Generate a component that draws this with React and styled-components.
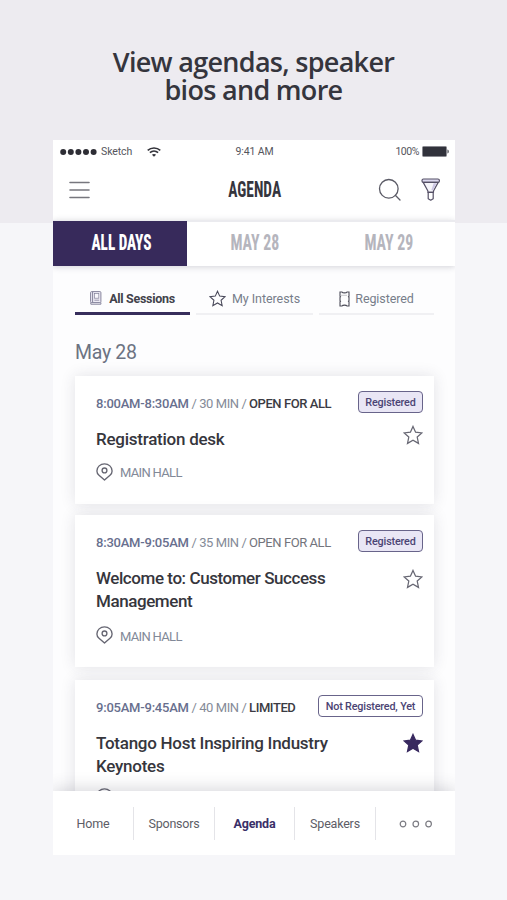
import styled, { createGlobalStyle } from "styled-components";

const GlobalStyle = createGlobalStyle`
  * {
    box-sizing: border-box;
  }
  body {
    margin: 0;
    background: #f6f6f9;
    font-family: Roboto, "Open Sans", sans-serif;
    color: #35353d;
  }
`;

const Page = styled.div`
  width: 507px;
  height: 900px;
  overflow: hidden;
  display: flex;
  flex-direction: column;
  align-items: center;
  background: linear-gradient(#edebf0 223px, #f6f6f9 223px);
`;

const Headline = styled.h1`
  height: 140px;
  margin: 0;
  padding-top: 48px;
  font-family: "Open Sans", sans-serif;
  font-size: 27px;
  font-weight: 600;
  line-height: 28px;
  letter-spacing: -0.7px;
  text-align: center;
`;

const Phone = styled.div`
  width: 402px;
  height: 715px;
  margin-right: -1px;
  display: flex;
  flex-direction: column;
  background: #fdfdfe;
  overflow: hidden;
`;

const StatusBar = styled.div`
  height: 23px;
  flex: none;
  display: grid;
  grid-template-columns: 1fr auto 1fr;
  align-items: center;
  padding: 0 6px 0 7px;
  background: #fff;
  font-size: 10.5px;
  letter-spacing: -0.1px;
  color: #55555c;
`;

const Carrier = styled.div`
  display: flex;
  align-items: center;
  gap: 4px;

  svg:last-child {
    margin-left: 11px;
  }
`;

const Battery = styled.div`
  display: flex;
  align-items: center;
  justify-content: flex-end;
  gap: 3px;
  letter-spacing: -0.45px;
`;

const Header = styled.div`
  height: 57px;
  flex: none;
  display: grid;
  grid-template-columns: 1fr auto 1fr;
  align-items: center;
  padding: 0 15px 4px 16px;
  background: #fff;
`;

const Actions = styled.div`
  display: flex;
  justify-content: flex-end;
  align-items: center;
  gap: 20px;
`;

// tall condensed lettering
const Narrow = styled.span`
  display: block;
  font-family: Roboto, sans-serif;
  font-stretch: 75%;
  font-size: 22px;
  font-weight: ${(props) => props.$weight || 700};
  line-height: 1;
  white-space: nowrap;
  transform: scaleX(${(props) => props.$squeeze});
`;

const DayTabs = styled.div`
  height: 46px;
  flex: none;
  display: grid;
  grid-template-columns: repeat(3, 1fr);
  border-top: 2px solid #ebebef;
  box-shadow: 0 1px 6px rgba(60, 60, 80, 0.22);
  background: #fff;
`;

const DayTab = styled.div`
  display: flex;
  align-items: center;
  justify-content: center;
  margin-top: ${(props) => (props.$active ? "-1px" : 0)};
  padding: 0 0 ${(props) => (props.$active ? "1px 3px" : "2px 1px")};
  background: ${(props) => (props.$active ? "#372a5b" : "#fff")};
  color: ${(props) => (props.$active ? "#fff" : "#b5b5bd")};
`;

const Content = styled.div`
  flex: 1;
  min-height: 0;
  padding: 18px 21px 0 22px;
  overflow: hidden;
`;

const Filters = styled.div`
  display: grid;
  grid-template-columns: 115px 117px 115px;
  gap: 6px;
`;

const Filter = styled.div`
  height: 31px;
  display: flex;
  align-items: center;
  justify-content: center;
  gap: ${(props) => props.$gap}px;
  border-bottom: ${(props) => (props.$active ? "3px solid #372e5c" : "2px solid #f0f0f3")};
  font-size: 12.5px;
  font-weight: ${(props) => (props.$active ? 700 : 400)};
  letter-spacing: ${(props) => props.$tracking}px;
  white-space: nowrap;
  color: ${(props) => (props.$active ? "#42424b" : "#777d8a")};
`;

const DayTitle = styled.h2`
  margin: 24px 0 10px;
  font-size: 19.5px;
  line-height: 27px;
  font-weight: 400;
  letter-spacing: -0.3px;
  color: #6c7382;
`;

const Card = styled.div`
  height: ${(props) => props.$height}px;
  margin-bottom: ${(props) => props.$after}px;
  padding: 15px 11px 0 21px;
  background: #fff;
  box-shadow: 0 0 14px rgba(50, 50, 70, 0.13);
`;

const CardTop = styled.div`
  display: flex;
  align-items: center;
  justify-content: space-between;
  height: 22px;
`;

const Meta = styled.div`
  padding-top: 2px;
  font-size: 13px;
  letter-spacing: -0.44px;
  white-space: nowrap;
  color: #858b98;
`;

const Time = styled.span`
  font-weight: 500;
  letter-spacing: -0.22px;
  color: #686f8e;
`;

const Access = styled.span`
  font-weight: ${(props) => (props.$strong ? 500 : 400)};
  color: ${(props) => (props.$strong ? "#3b3b43" : "#73747c")};
`;

const Badge = styled.div`
  height: 22px;
  width: ${(props) => (props.$filled ? 65 : 105)}px;
  display: flex;
  align-items: center;
  justify-content: center;
  border: 1.5px solid #68648a;
  border-radius: 4px;
  background: ${(props) => (props.$filled ? "#e9e6f5" : "#fff")};
  font-size: 10.8px;
  font-weight: 500;
  letter-spacing: -0.17px;
  white-space: nowrap;
  color: #4b4474;
`;

const CardBody = styled.div`
  display: flex;
  justify-content: space-between;
  margin-top: ${(props) => props.$top}px;
`;

const SessionTitle = styled.h3`
  margin: 0;
  width: 250px;
  font-size: 17px;
  line-height: 22.5px;
  font-weight: 500;
  letter-spacing: ${(props) => props.$tracking}px;
  color: #36363d;
`;

const StarSlot = styled.div`
  display: flex;
  margin-top: ${(props) => props.$top}px;
  height: 20px;
`;

const Place = styled.div`
  display: flex;
  align-items: center;
  gap: 7px;
  margin-top: ${(props) => props.$top}px;
  font-size: 13px;
  letter-spacing: -0.68px;
  color: #828998;

  span {
    padding-top: 2px;
  }
`;

const BottomNav = styled.div`
  position: relative;
  height: 64px;
  flex: none;
  display: grid;
  grid-template-columns: 81px 81px 80px 81px 79px;
  align-items: center;
  background: #fff;
  box-shadow: 0 -2px 16px rgba(50, 50, 70, 0.2);
`;

const NavItem = styled.div`
  height: 33px;
  display: flex;
  align-items: center;
  justify-content: center;
  padding-top: 1px;
  border-right: ${(props) => (props.$last ? "none" : "1px solid #e4e4e8")};
  font-size: 12.5px;
  font-weight: ${(props) => (props.$active ? 700 : 400)};
  letter-spacing: -0.2px;
  color: ${(props) => (props.$active ? "#3a2f68" : "#5d5d66")};
`;

const SignalDots = () => (
  <svg width="37" height="8" viewBox="0 0 37 8" fill="#2e2e35">
    {[3.2, 10.8, 18.4, 26, 33.6].map((x) => (
      <circle key={x} cx={x} cy="4" r="3" />
    ))}
  </svg>
);

const Wifi = () => (
  <svg width="14" height="10" viewBox="0 0 14 10" fill="none" stroke="#34343b" strokeWidth="1.6">
    <path d="M.7 3.4C4.3.1 9.7.1 13.3 3.4" />
    <path d="M2.9 5.7c2.4-2.1 5.8-2.1 8.2 0" />
    <path d="M4.9 7.8c1.2-1 3-1 4.2 0L7 9.8z" fill="#34343b" stroke="none" />
  </svg>
);

const BatteryIcon = () => (
  <svg width="27" height="11" viewBox="0 0 27 11">
    <rect x=".5" y=".5" width="24" height="10" rx="1" fill="#31323b" stroke="#8a8a91" />
    <path d="M25.5 3.5c1.6.5 1.6 3.5 0 4z" fill="#31323b" />
  </svg>
);

const Menu = () => (
  <svg width="21" height="18" viewBox="0 0 21 18" stroke="#77777e" strokeWidth="1.6" strokeLinecap="round">
    <path d="M1 1.5h19M1 9h19M1 16.5h19" />
  </svg>
);

const Search = () => (
  <svg width="23" height="23" viewBox="0 0 23 23" fill="none" stroke="#5b5b66" strokeWidth="1.3" strokeLinecap="round">
    <circle cx="10.8" cy="10.8" r="9.3" />
    <path d="M17.3 17.3l4.7 4.7" />
  </svg>
);

const Funnel = () => (
  <svg width="19" height="23" viewBox="0 0 19 23" fill="none" stroke="#555066" strokeWidth="1.2" strokeLinejoin="round">
    <rect x="1" y="1" width="17.4" height="3.4" rx="1.5" fill="#dcd8ee" />
    <path d="M2.2 4.4L6.9 13v1.3h5.6V13l4.7-8.6z" fill="#f6f5fa" />
    <path d="M12.7 5.2L10.4 12l1.4.5 3.8-7.3z" fill="#cbc5e4" stroke="none" />
    <path d="M7.2 14.3h5v6.4l-2.5 1.5-2.5-1.5z" fill="#fff" />
  </svg>
);

const Book = () => (
  <svg width="12" height="14" viewBox="0 0 12 14" fill="none" stroke="#85839b">
    <rect x=".6" y=".6" width="10.3" height="11" rx="1" fill="#eeecf5" />
    <path d="M2.6 1v10.4M.8 11.3v1.9h10.1v-1.6" />
    <rect x="4.4" y="2.6" width="4.4" height="4.6" fill="#f8f7fc" strokeWidth=".7" />
    <path d="M4.4 9.2h4.8" strokeWidth=".8" />
  </svg>
);

const Ticket = () => (
  <svg width="11" height="16" viewBox="0 0 11 16" fill="none" stroke="#4c4c58" strokeWidth="1.1">
    <path d="M1 1h2q.5.9 2.5.9T8 1h2v4.2l-.5.6.5.6v3.2l-.5.6.5.6V15H8q-.5-.9-2.5-.9T3 15H1v-4.2l.5-.6-.5-.6V6.4l.5-.6-.5-.6z" />
    <path d="M2.5 4.3h6" strokeDasharray="1 1" strokeWidth=".6" />
  </svg>
);

const Star = ({ size = 20, filled, color = "#676773" }) => (
  <svg width={size} height={size} viewBox="0 0 20 20" fill={filled ? color : "none"} stroke={color} strokeWidth="1.25" strokeLinejoin="miter">
    <path d="M10 1.4l2.6 5.8 6.3.7-4.7 4.2 1.3 6.3-5.5-3.2-5.5 3.2 1.3-6.3L1.1 7.9l6.3-.7z" />
  </svg>
);

const Pin = () => (
  <svg width="17" height="18" viewBox="0 0 17 18" fill="none" stroke="#666672" strokeWidth="1.35" strokeLinejoin="round">
    <path d="M8.5 17.1L3 12.2C1.5 10.9.9 9.5.9 7.9a7.6 7.1 0 0 1 15.2 0c0 1.6-.6 3-2.1 4.3z" />
    <circle cx="8.5" cy="7.4" r="2.4" />
  </svg>
);

const More = () => (
  <svg width="34" height="8" viewBox="0 0 34 8" fill="none" stroke="#7b7b82" strokeWidth="1.2">
    <circle cx="4" cy="4" r="2.8" />
    <circle cx="16.8" cy="4" r="2.8" />
    <circle cx="29.6" cy="4" r="2.8" />
  </svg>
);

const sessions = [
  {
    time: "8:00AM-8:30AM",
    length: "30 MIN",
    access: "OPEN FOR ALL",
    strong: true,
    title: "Registration desk",
    registered: true,
    height: 128,
    after: 11,
    bodyTop: 15,
    starTop: -3,
    placeTop: 12,
    tracking: -0.25,
  },
  {
    time: "8:30AM-9:05AM",
    length: "35 MIN",
    access: "OPEN FOR ALL",
    title: "Welcome to: Customer Success Management",
    registered: true,
    height: 152,
    after: 13,
    bodyTop: 15,
    starTop: 2,
    placeTop: 14,
    tracking: -0.43,
  },
  {
    time: "9:05AM-9:45AM",
    length: "40 MIN",
    access: "LIMITED",
    strong: true,
    title: "Totango Host Inspiring Industry Keynotes",
    favourite: true,
    height: 152,
    after: 0,
    bodyTop: 15,
    starTop: 1,
    placeTop: 11,
    tracking: -0.26,
  },
];

const Session = ({ item }) => (
  <Card $height={item.height} $after={item.after}>
    <CardTop>
      <Meta>
        <Time>{item.time}</Time> / {item.length} / <Access $strong={item.strong}>{item.access}</Access>
      </Meta>
      <Badge $filled={item.registered}>{item.registered ? "Registered" : "Not Registered, Yet"}</Badge>
    </CardTop>
    <CardBody $top={item.bodyTop}>
      <SessionTitle $tracking={item.tracking}>{item.title}</SessionTitle>
      <StarSlot $top={item.starTop}>
        <Star filled={item.favourite} color={item.favourite ? "#38295f" : undefined} />
      </StarSlot>
    </CardBody>
    <Place $top={item.placeTop}>
      <Pin />
      <span>MAIN HALL</span>
    </Place>
  </Card>
);

const App = () => {
  return (
    <Page>
      <GlobalStyle />
      <Headline>
        View agendas, speaker
        <br />
        bios and more
      </Headline>
      <Phone>
        <StatusBar>
          <Carrier>
            <SignalDots />
            Sketch
            <Wifi />
          </Carrier>
          <span>9:41 AM</span>
          <Battery>
            100%
            <BatteryIcon />
          </Battery>
        </StatusBar>
        <Header>
          <Menu />
          <Narrow $weight={700} $squeeze={0.7}>AGENDA</Narrow>
          <Actions>
            <Search />
            <Funnel />
          </Actions>
        </Header>
        <DayTabs>
          <DayTab $active>
            <Narrow $weight={800} $squeeze={0.69}>ALL DAYS</Narrow>
          </DayTab>
          <DayTab>
            <Narrow $squeeze={0.72}>MAY 28</Narrow>
          </DayTab>
          <DayTab>
            <Narrow $squeeze={0.72}>MAY 29</Narrow>
          </DayTab>
        </DayTabs>
        <Content>
          <Filters>
            <Filter $active $gap={7} $tracking={-0.3}>
              <Book />
              All Sessions
            </Filter>
            <Filter $gap={6} $tracking={-0.05}>
              <Star size={17} color="#484859" />
              My Interests
            </Filter>
            <Filter $gap={5} $tracking={-0.1}>
              <Ticket />
              Registered
            </Filter>
          </Filters>
          <DayTitle>May 28</DayTitle>
          {sessions.map((item) => (
            <Session key={item.time} item={item} />
          ))}
        </Content>
        <BottomNav>
          <NavItem>Home</NavItem>
          <NavItem>Sponsors</NavItem>
          <NavItem $active>Agenda</NavItem>
          <NavItem>Speakers</NavItem>
          <NavItem $last>
            <More />
          </NavItem>
        </BottomNav>
      </Phone>
    </Page>
  );
};

export default App;
